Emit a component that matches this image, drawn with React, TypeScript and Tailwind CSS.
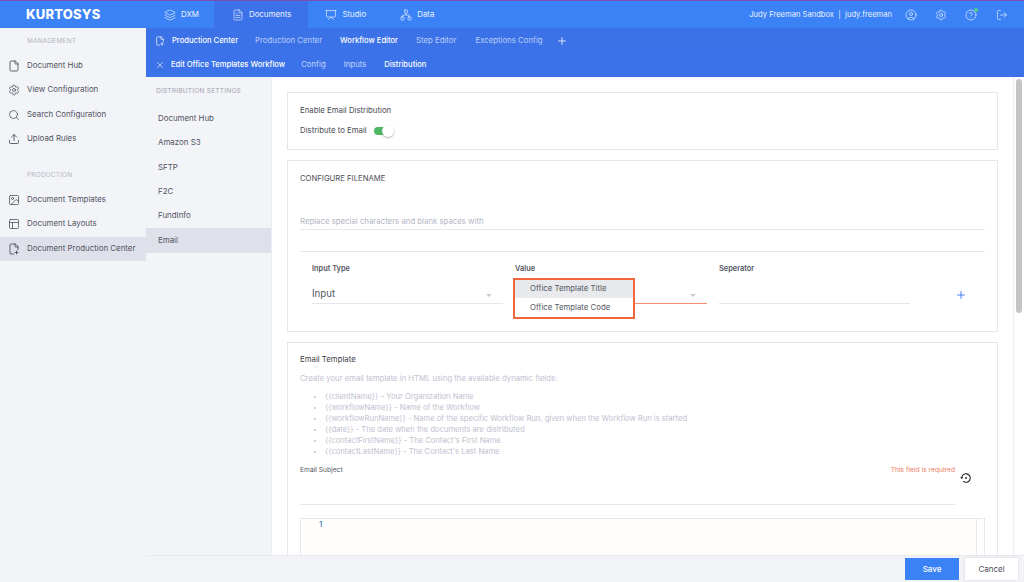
import React from "react";
import { Layers, FileText, Presentation, Network, CircleUser, Settings, CircleHelp, LogOut, X, Plus, Search, Upload, Image, PanelsTopLeft, File, FilePlus2 } from "lucide-react";

const font = { fontFamily: "Inter, 'Noto Sans', sans-serif" };

function TopItem({ icon, label, active, pad }: { icon: React.ReactNode; label: string; active?: boolean; pad: string }) {
  return (
    <div className={`flex h-full items-center gap-[5px] text-[7.9px] text-[#eaf1ff] ${pad} ${active ? "bg-[#3b72ea]" : ""}`}>
      {icon}
      <span>{label}</span>
    </div>
  );
}

function SideItem({ icon, label, active }: { icon: React.ReactNode; label: string; active?: boolean }) {
  return (
    <div className={`flex h-[24.5px] items-center gap-[7px] pl-[8px] text-[7.9px] text-[#50535f] ${active ? "bg-[#dfe1ea]" : ""}`}>
      <span className="flex w-[12px] justify-center text-[#3c3f4a]">{icon}</span>
      <span>{label}</span>
    </div>
  );
}

function SelectField({ label, value, error, className }: { label: string; value?: string; error?: boolean; className: string }) {
  return (
    <div className={className}>
      <div className="text-[7.4px] font-semibold leading-[10px] text-[#55575f]">{label}</div>
      <div className={`mt-[10px] flex h-[20px] items-center justify-between border-b pt-[2px] pr-[11px] ${error ? "border-[#f58a75]" : "border-[#e6e7ee]"}`}>
        <span className="text-[9.7px] text-[#55575f]">{value}</span>
        {value !== undefined && <span className="mt-[2px] h-0 w-0 border-x-[3px] border-t-[3px] border-x-transparent border-t-[#c9cbd5]" />}
      </div>
    </div>
  );
}

export default function App() {
  const fields = [
    "{{clientName}} – Your Organization Name",
    "{{workflowName}} - Name of the Workflow",
    "{{workflowRunName}} - Name of the specific Workflow Run, given when the Workflow Run is started",
    "{{date}} - The date when the documents are distributed",
    "{{contactFirstName}} - The Contact's First Name",
    "{{contactLastName}} - The Contact's Last Name",
  ];
  return (
    <div className="flex h-[582px] w-[1024px] flex-col overflow-hidden bg-white" style={font}>
      <header className="flex h-[28px] shrink-0 items-center border-t border-[#7a4fb5] bg-[#3b82f6]">
        <div className="w-[146px] pl-[26px] text-[13px] font-extrabold tracking-[0.2px] text-white">KURTOSYS</div>
        <div className="flex h-full items-center">
          <TopItem pad="pl-[18px] pr-[15px] pt-[1px]" icon={<Layers size={12} strokeWidth={1.3} />} label="DXM" />
          <TopItem pad="pl-[18px] pr-[17px] pt-[1px]" active icon={<FileText size={12} strokeWidth={1.3} />} label="Documents" />
          <TopItem pad="pl-[17px] pr-[17px] pt-[1px]" icon={<Presentation size={12} strokeWidth={1.3} />} label="Studio" />
          <TopItem pad="pl-[17px] pr-[17px] pt-[1px]" icon={<Network size={12} strokeWidth={1.3} />} label="Data" />
        </div>
        <div className="ml-auto flex items-center pr-[16px] pt-[1px] text-white">
          <span className="mr-[13px] text-[7.6px] text-[#eaf1ff]">Judy Freeman Sandbox&nbsp; |&nbsp; judy.freeman</span>
          <CircleUser size={12} strokeWidth={1.2} />
          <Settings size={12} strokeWidth={1.2} className="ml-[18px]" />
          <span className="relative ml-[18px]">
            <CircleHelp size={12} strokeWidth={1.2} />
            <span className="absolute right-[-1px] top-[-1px] h-[4px] w-[4px] rounded-full bg-[#4fd08a]" />
          </span>
          <LogOut size={12} strokeWidth={1.2} className="ml-[19px]" />
        </div>
      </header>

      <div className="flex min-h-0 flex-1">
        <aside className="w-[146px] shrink-0 bg-[#f3f4f8] shadow-[1px_0_2px_rgba(0,0,0,0.08)]">
          <div className="pl-[27px] pt-[9px] text-[6.5px] leading-[9px] tracking-[0.2px] text-[#b4b6c2]">MANAGEMENT</div>
          <div className="mt-[7.5px]">
            <SideItem icon={<File size={12} strokeWidth={1.6} />} label="Document Hub" />
            <SideItem icon={<Settings size={12} strokeWidth={1.4} />} label="View Configuration" />
            <SideItem icon={<Search size={12} strokeWidth={1.4} />} label="Search Configuration" />
            <SideItem icon={<Upload size={12} strokeWidth={1.6} />} label="Upload Rules" />
          </div>
          <div className="pl-[27px] pt-[19px] text-[6.5px] leading-[9px] tracking-[0.2px] text-[#b4b6c2]">PRODUCTION</div>
          <div className="mt-[8px]">
            <SideItem icon={<Image size={12} strokeWidth={1.4} />} label="Document Templates" />
            <SideItem icon={<PanelsTopLeft size={12} strokeWidth={1.4} />} label="Document Layouts" />
            <SideItem active icon={<FilePlus2 size={12} strokeWidth={1.6} />} label="Document Production Center" />
          </div>
        </aside>

        <div className="flex min-w-0 flex-1 flex-col">
          <div className="flex h-[24px] shrink-0 items-center bg-[#3b72e8] pl-[9px] pt-[1px] text-[7.8px] text-[#b9cffa]">
            <FilePlus2 size={10} strokeWidth={1.6} className="text-white" />
            <span className="ml-[7px] text-[7.6px] font-medium text-white">Production Center</span>
            <span className="ml-[17px]">Production Center</span>
            <span className="ml-[18px] text-[7.6px] font-medium text-white">Workflow Editor</span>
            <span className="ml-[18px]">Step Editor</span>
            <span className="ml-[19px]">Exceptions Config</span>
            <Plus size={12} strokeWidth={1.5} className="ml-[13px] text-white" />
          </div>
          <div className="flex h-[25px] shrink-0 items-center bg-[#3b72ea] pl-[9px] pt-[1px] text-[7.8px] text-[#c3d6fb]">
            <X size={10} strokeWidth={1.5} className="text-white" />
            <span className="ml-[6px] text-[7.6px] font-medium text-white">Edit Office Templates Workflow</span>
            <span className="ml-[16px]">Config</span>
            <span className="ml-[18px]">Inputs</span>
            <span className="ml-[18px] text-[7.6px] font-medium text-white">Distribution</span>
          </div>

          <div className="flex min-h-0 flex-1">
            <nav className="w-[125px] shrink-0 bg-[#f3f4f8]">
              <div className="pl-[10px] pt-[10px] text-[6.6px] leading-[9px] tracking-[0.2px] text-[#a0a2ae]">DISTRIBUTION SETTINGS</div>
              <div className="mt-[10.5px]">
                {["Document Hub", "Amazon S3", "SFTP", "F2C", "FundInfo", "Email"].map((t) => (
                  <div key={t} className={`flex h-[24.4px] items-center pl-[12px] text-[7.9px] text-[#50535f] ${t === "Email" ? "bg-[#dfe1ea]" : ""}`}>{t}</div>
                ))}
              </div>
            </nav>

            <main className="flex min-w-0 flex-1 overflow-hidden border-l border-[#eceef3]">
              <div className="min-w-0 flex-1 pl-[15px] pr-[15px] pt-[15px]">
                <section className="h-[58px] border border-[#e6e7ee] px-[12px] pt-[12px]">
                  <div className="text-[7.8px] leading-[11px] text-[#4a4c56]">Enable Email Distribution</div>
                  <div className="mt-[9px] flex items-center gap-[7px]">
                    <span className="text-[7.8px] leading-[11px] text-[#4a4c56]">Distribute to Email</span>
                    <span className="relative h-[8px] w-[16px] rounded-full bg-[#4fb866]">
                      <span className="absolute right-[-4px] top-[-2px] h-[12px] w-[12px] rounded-full bg-white shadow-[0_1px_2px_rgba(0,0,0,0.3)]" />
                    </span>
                  </div>
                </section>

                <section className="relative mt-[10px] h-[172px] border border-[#e6e7ee] px-[12px] pt-[12px]">
                  <div className="text-[7.7px] leading-[11px] text-[#4a4c56]">CONFIGURE FILENAME</div>
                  <div className="mt-[32px] border-b border-[#e6e7ee] pb-[2px] text-[7.8px] leading-[11px] text-[#b4b6c4]">Replace special characters and blank spaces with</div>
                  <div className="mt-[21px] flex items-start border-t border-[#e6e7ee] pl-[12px] pt-[12px]">
                    <SelectField label="Input Type" value="Input" className="w-[191px]" />
                    <SelectField label="Value" value="" error className="ml-[12px] w-[192px]" />
                    <SelectField label="Seperator" className="ml-[12px] w-[191px]" />
                    <Plus size={12} strokeWidth={1.8} className="ml-[45px] mt-[25px] text-[#3b72ea]" />
                  </div>
                  <div className="absolute left-[225px] top-[117px] w-[122px] border-[2.5px] border-[#f0673c] bg-white text-[7.8px] text-[#55575f]">
                    <div className="flex h-[18px] items-center bg-[#e8e9ec] pl-[15px]">Office Template Title</div>
                    <div className="flex h-[19px] items-center pl-[15px]">Office Template Code</div>
                  </div>
                </section>

                <section className="mt-[10px] h-[300px] border border-[#e6e7ee] px-[12px] pt-[11px]">
                  <div className="text-[7.8px] leading-[11px] text-[#3f414a]">Email Template</div>
                  <div className="mt-[8px] text-[7.7px] leading-[11px] text-[#bfc1d0]">Create your email template in HTML using the available dynamic fields:</div>
                  <ul className="mt-[7px] list-disc pl-[25px] text-[7.6px] leading-[11px] text-[#bfc1d0]">
                    {fields.map((f) => <li key={f}>{f}</li>)}
                  </ul>
                  <div className="mt-[8px] flex items-start">
                    <div className="w-[655px]">
                      <div className="flex justify-between text-[6.7px] leading-[11px]">
                        <span className="text-[#55575f]">Email Subject</span>
                        <span className="text-[#ee7a5e]">This field is required</span>
                      </div>
                      <div className="h-[29px] border-b border-[#e6e7ee]" />
                    </div>
                    <svg width="12" height="12" viewBox="0 0 24 24" fill="none" stroke="#222" strokeWidth="2.2" className="ml-[5px] mt-[7px]">
                      <path d="M3.5 12a8.5 8.5 0 1 1 3 6.5" />
                      <path d="M0.5 10.5h6L3.5 14.5z" fill="#222" stroke="none" />
                      <circle cx="12" cy="12" r="1.8" fill="#222" stroke="none" />
                    </svg>
                  </div>
                  <div className="mt-[13px] flex h-[60px] border border-[#e6e7ee] bg-[#fffefd]">
                    <div className="flex-1 pl-[18px] text-[8px] font-medium leading-[10px] text-[#2f7fb0]">1</div>
                    <div className="w-[8px] border-l border-[#e6e7ee] bg-white" />
                  </div>
                </section>
              </div>
              <div className="flex w-[11px] shrink-0 justify-center border-l border-[#eceef3] bg-white pt-[2px]">
                <div className="h-[234px] w-[6px] rounded-full bg-[#c4c4c4]" />
              </div>
            </main>
          </div>

          <footer className="flex h-[27px] shrink-0 items-center justify-end gap-[6px] border-t border-[#e8e9ef] bg-[#f2f3f7] pr-[6px] text-[8px]">
            <button className="h-[22px] w-[54px] bg-[#3b82f6] font-medium text-white">Save</button>
            <button className="h-[22px] w-[53px] bg-white text-[#4a4c56] shadow-[0_0_2px_rgba(0,0,0,0.15)]">Cancel</button>
          </footer>
        </div>
      </div>
    </div>
  );
}
